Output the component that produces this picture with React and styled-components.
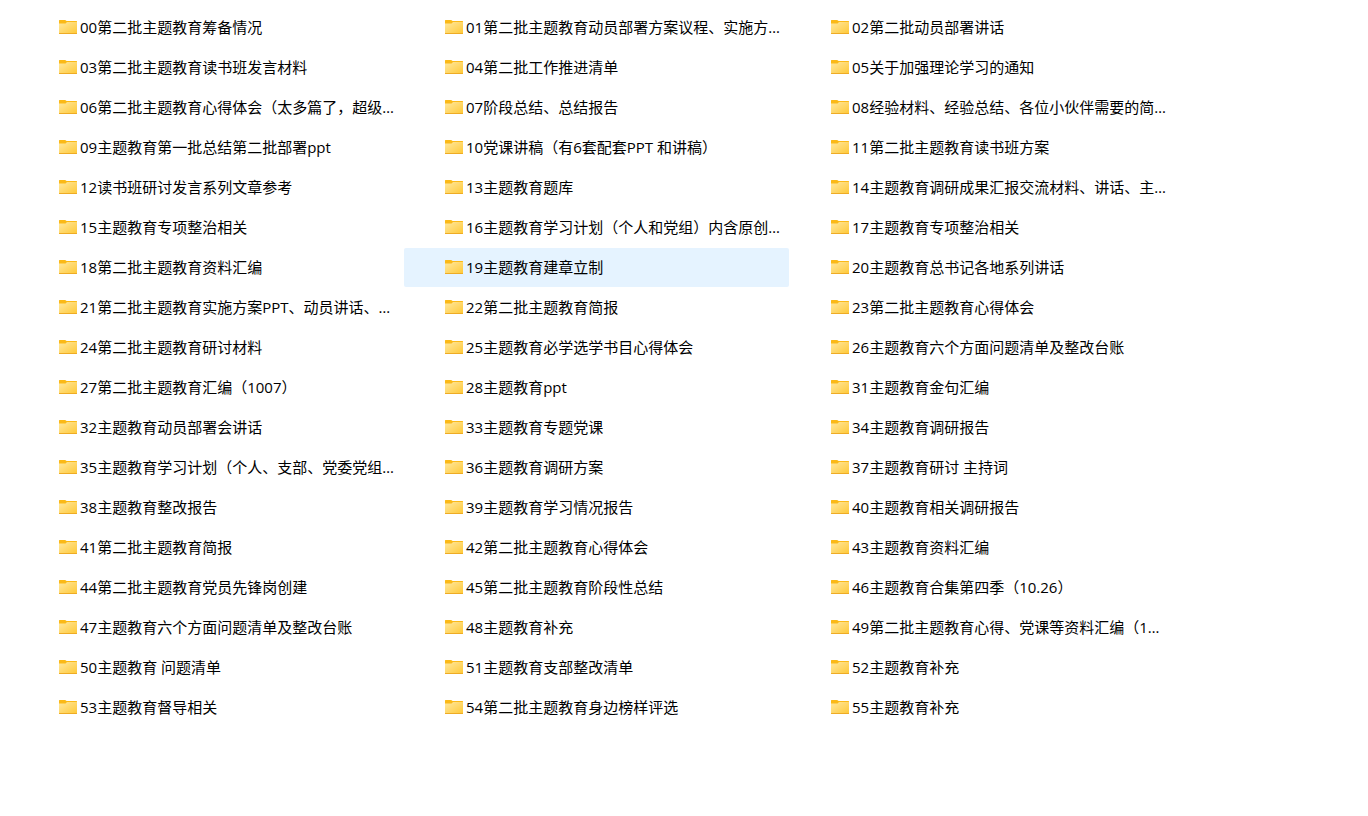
import React, {Component} from 'react'
import styled, {createGlobalStyle} from 'styled-components'

const GlobalStyle = createGlobalStyle`
  body {
    margin: 0;
    background: #fff;
    color: #000;
    font-family: 'Open Sans', 'Noto Sans CJK SC', sans-serif;
    font-size: 15px;
  }
`

const FolderGrid = styled.ul`
  display: grid;
  grid-template-columns: repeat(auto-fill, 385px);
  gap: 1px;
  margin: 0;
  padding: 8px 18px;
  list-style: none;
`

const FolderButton = styled.button`
  display: flex;
  align-items: center;
  gap: 3px;
  width: 100%;
  height: 39px;
  padding: 0 0 2px 41px;
  border: 0;
  border-radius: 2px;
  background: ${props => props.$selected ? '#e5f3ff' : 'transparent'};
  color: inherit;
  font: inherit;
  text-align: left;
  cursor: default;
`

const FolderName = styled.span`
  line-height: 20px;
  white-space: nowrap;
`

const FolderSvg = styled.svg`
  flex: none;
  width: 18px;
  height: 14px;
`

const FolderIcon = () => (
  <FolderSvg viewBox="0 0 18 14" aria-hidden="true">
    <path d="M0 .5Q0 0 .5 0H6Q6.6 0 7 .5L7.5 1H17.5Q18 1 18 1.5V6H0Z" fill="#fbb917" />
    <path d="M0 3.5H6Q6.6 3.5 7 3L8 2H18V13.5H0Z" fill="url(#folder-front)" />
    <path d="M0 13H18V13.5Q18 14 17.5 14H.5Q0 14 0 13.5Z" fill="#eeab25" />
  </FolderSvg>
)

const folders = [
  '00第二批主题教育筹备情况',
  '01第二批主题教育动员部署方案议程、实施方…',
  '02第二批动员部署讲话',
  '03第二批主题教育读书班发言材料',
  '04第二批工作推进清单',
  '05关于加强理论学习的通知',
  '06第二批主题教育心得体会（太多篇了，超级…',
  '07阶段总结、总结报告',
  '08经验材料、经验总结、各位小伙伴需要的简…',
  '09主题教育第一批总结第二批部署ppt',
  '10党课讲稿（有6套配套PPT 和讲稿）',
  '11第二批主题教育读书班方案',
  '12读书班研讨发言系列文章参考',
  '13主题教育题库',
  '14主题教育调研成果汇报交流材料、讲话、主…',
  '15主题教育专项整治相关',
  '16主题教育学习计划（个人和党组）内含原创…',
  '17主题教育专项整治相关',
  '18第二批主题教育资料汇编',
  '19主题教育建章立制',
  '20主题教育总书记各地系列讲话',
  '21第二批主题教育实施方案PPT、动员讲话、…',
  '22第二批主题教育简报',
  '23第二批主题教育心得体会',
  '24第二批主题教育研讨材料',
  '25主题教育必学选学书目心得体会',
  '26主题教育六个方面问题清单及整改台账',
  '27第二批主题教育汇编（1007）',
  '28主题教育ppt',
  '31主题教育金句汇编',
  '32主题教育动员部署会讲话',
  '33主题教育专题党课',
  '34主题教育调研报告',
  '35主题教育学习计划（个人、支部、党委党组…',
  '36主题教育调研方案',
  '37主题教育研讨 主持词',
  '38主题教育整改报告',
  '39主题教育学习情况报告',
  '40主题教育相关调研报告',
  '41第二批主题教育简报',
  '42第二批主题教育心得体会',
  '43主题教育资料汇编',
  '44第二批主题教育党员先锋岗创建',
  '45第二批主题教育阶段性总结',
  '46主题教育合集第四季（10.26）',
  '47主题教育六个方面问题清单及整改台账',
  '48主题教育补充',
  '49第二批主题教育心得、党课等资料汇编（1…',
  '50主题教育 问题清单',
  '51主题教育支部整改清单',
  '52主题教育补充',
  '53主题教育督导相关',
  '54第二批主题教育身边榜样评选',
  '55主题教育补充'
]

class App extends Component {

  state = {
    selected: 19
  }

  renderFolders () {
    return folders.map((name, index) => {
      const selected = index === this.state.selected

      return (
        <li key={name}>
          <FolderButton
            type="button"
            aria-pressed={selected}
            $selected={selected}
            onClick={() => this.setState({selected: index})}
          >
            <FolderIcon />
            <FolderName>{name}</FolderName>
          </FolderButton>
        </li>
      )
    })
  }

  render () {
    return (
      <main>
        <GlobalStyle />
        {/* gradient shared by every folder icon */}
        <svg width="0" height="0" style={{display: 'block'}} aria-hidden="true">
          <linearGradient id="folder-front" x1="0" y1="0" x2="1" y2="1">
            <stop offset="0" stopColor="#ffe8a0" />
            <stop offset="1" stopColor="#ffc937" />
          </linearGradient>
        </svg>
        <FolderGrid>
          {this.renderFolders()}
        </FolderGrid>
      </main>
    )
  }
}

export default App
